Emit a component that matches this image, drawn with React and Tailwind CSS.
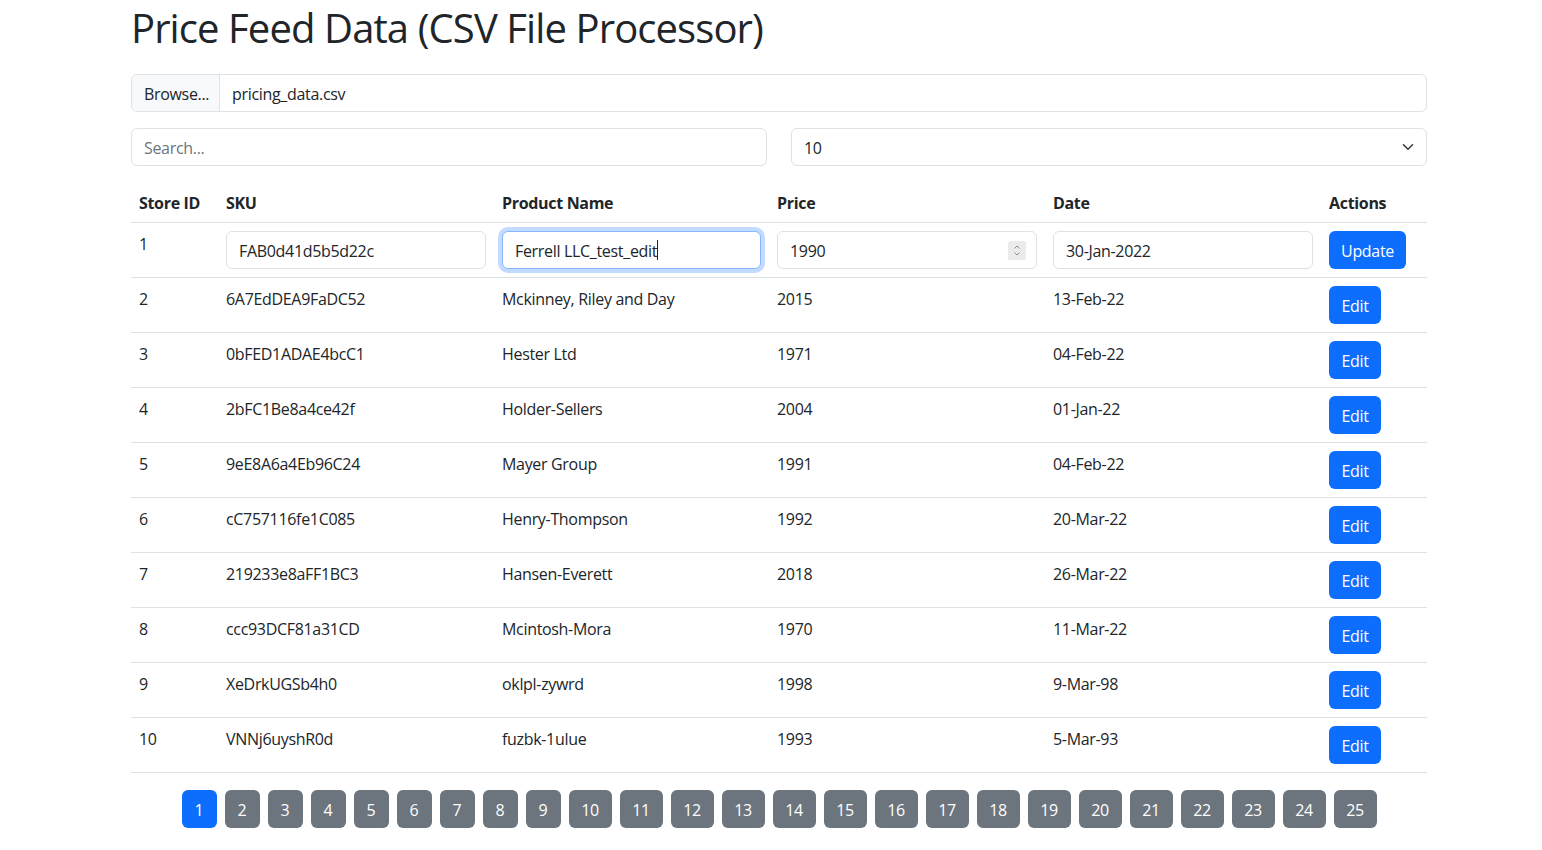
import React from "react";

const rows = [
  [2, "6A7EdDEA9FaDC52", "Mckinney, Riley and Day", "2015", "13-Feb-22"],
  [3, "0bFED1ADAE4bcC1", "Hester Ltd", "1971", "04-Feb-22"],
  [4, "2bFC1Be8a4ce42f", "Holder-Sellers", "2004", "01-Jan-22"],
  [5, "9eE8A6a4Eb96C24", "Mayer Group", "1991", "04-Feb-22"],
  [6, "cC757116fe1C085", "Henry-Thompson", "1992", "20-Mar-22"],
  [7, "219233e8aFF1BC3", "Hansen-Everett", "2018", "26-Mar-22"],
  [8, "ccc93DCF81a31CD", "Mcintosh-Mora", "1970", "11-Mar-22"],
  [9, "XeDrkUGSb4h0", "oklpl-zywrd", "1998", "9-Mar-98"],
  [10, "VNNj6uyshR0d", "fuzbk-1ulue", "1993", "5-Mar-93"],
];

const pages = Array.from({ length: 25 }, (_, i) => i + 1);

function Field({ children, focused, className = "" }) {
  return (
    <div
      className={
        "h-[38px] rounded-md border px-3 pt-[2px] flex items-center bg-white whitespace-nowrap overflow-hidden " +
        (focused
          ? "border-[#86b7fe] shadow-[0_0_0_4px_rgba(13,110,253,0.25)] "
          : "border-[#dee2e6] ") +
        className
      }
    >
      {children}
    </div>
  );
}

const td = "px-2 py-2 align-top border-b border-[#dee2e6]";
const tdText = "px-2 pt-[9px] pb-[7px] align-top border-b border-[#dee2e6]";

export default function App() {
  return (
    <div className="min-h-[850px] bg-white text-[#212529] text-base leading-6 tracking-[-0.02em] font-['Open_Sans',sans-serif]">
      <div className="ml-[131px] w-[1296px] pt-[4px]">
        <h1 className="text-[40px] leading-[48px] font-normal tracking-[-0.0225em]">
          Price Feed Data (CSV File Processor)
        </h1>

        <div className="mt-[22px] h-[38px] flex border border-[#dee2e6] rounded-md overflow-hidden">
          <div className="bg-[#f8f9fa] px-3 pt-[2px] flex items-center border-r border-[#dee2e6] w-[88px]">
            Browse...
          </div>
          <div className="px-3 pt-[2px] flex items-center">pricing_data.csv</div>
        </div>

        <div className="mt-4 grid grid-cols-2 gap-6">
          <Field>
            <span className="text-[#6c757d]">Search...</span>
          </Field>
          <Field className="justify-between">
            <span>10</span>
            <svg width="16" height="12" viewBox="0 0 16 16" className="-mr-[2px] -mt-[2px]">
              <path
                d="m2 5 6 6 6-6"
                fill="none"
                stroke="#343a40"
                strokeWidth="2"
                strokeLinecap="round"
                strokeLinejoin="round"
              />
            </svg>
          </Field>
        </div>

        <table className="mt-4 w-full table-fixed border-collapse">
          <colgroup>
            <col className="w-[87px]" />
            <col className="w-[276px]" />
            <col className="w-[275px]" />
            <col className="w-[276px]" />
            <col className="w-[276px]" />
            <col className="w-[106px]" />
          </colgroup>
          <thead>
            <tr className="text-left">
              {["Store ID", "SKU", "Product Name", "Price", "Date", "Actions"].map((h) => (
                <th key={h} className={tdText + " font-bold"}>
                  {h}
                </th>
              ))}
            </tr>
          </thead>
          <tbody>
            <tr>
              <td className={tdText}>1</td>
              <td className={td}>
                <Field>FAB0d41d5b5d22c</Field>
              </td>
              <td className={td}>
                <Field focused>
                  Ferrell LLC_test_edit
                  <span className="inline-block w-px h-[20px] -mt-[2px] bg-[#212529]" />
                </Field>
              </td>
              <td className={td}>
                <Field className="justify-between">
                  <span>1990</span>
                  <span className="-mr-[2px] -mt-[2px] w-[18px] h-[19px] bg-[#ebebeb] rounded-[2px] flex items-center justify-center">
                    <svg width="8" height="13" viewBox="0 0 8 13">
                      <path d="M1.5 4.5 4 2l2.5 2.5M1.5 8.5 4 11l2.5-2.5" fill="none" stroke="#8a8a8a" strokeWidth="1" />
                    </svg>
                  </span>
                </Field>
              </td>
              <td className={td}>
                <Field>30-Jan-2022</Field>
              </td>
              <td className={td}>
                <button className="h-[38px] w-[77px] pt-[2px] rounded-md bg-[#0d6efd] text-white">Update</button>
              </td>
            </tr>
            {rows.map((r) => (
              <tr key={r[0]}>
                <td className={tdText}>{r[0]}</td>
                <td className={tdText}>{r[1]}</td>
                <td className={tdText}>{r[2]}</td>
                <td className={tdText}>{r[3]}</td>
                <td className={tdText}>{r[4]}</td>
                <td className={td}>
                  <button className="h-[38px] w-[52px] pt-[2px] rounded-md bg-[#0d6efd] text-white">Edit</button>
                </td>
              </tr>
            ))}
          </tbody>
        </table>

        <div className="mt-[17px] flex justify-center gap-2">
          {pages.map((p) => (
            <button
              key={p}
              className={
                "h-[38px] pt-[2px] rounded-md text-white flex items-center justify-center " +
                (p < 10 ? "w-[35px] " : "w-[43px] ") +
                (p === 1 ? "bg-[#0d6efd]" : "bg-[#6c757d]")
              }
            >
              {p}
            </button>
          ))}
        </div>
      </div>
    </div>
  );
}
